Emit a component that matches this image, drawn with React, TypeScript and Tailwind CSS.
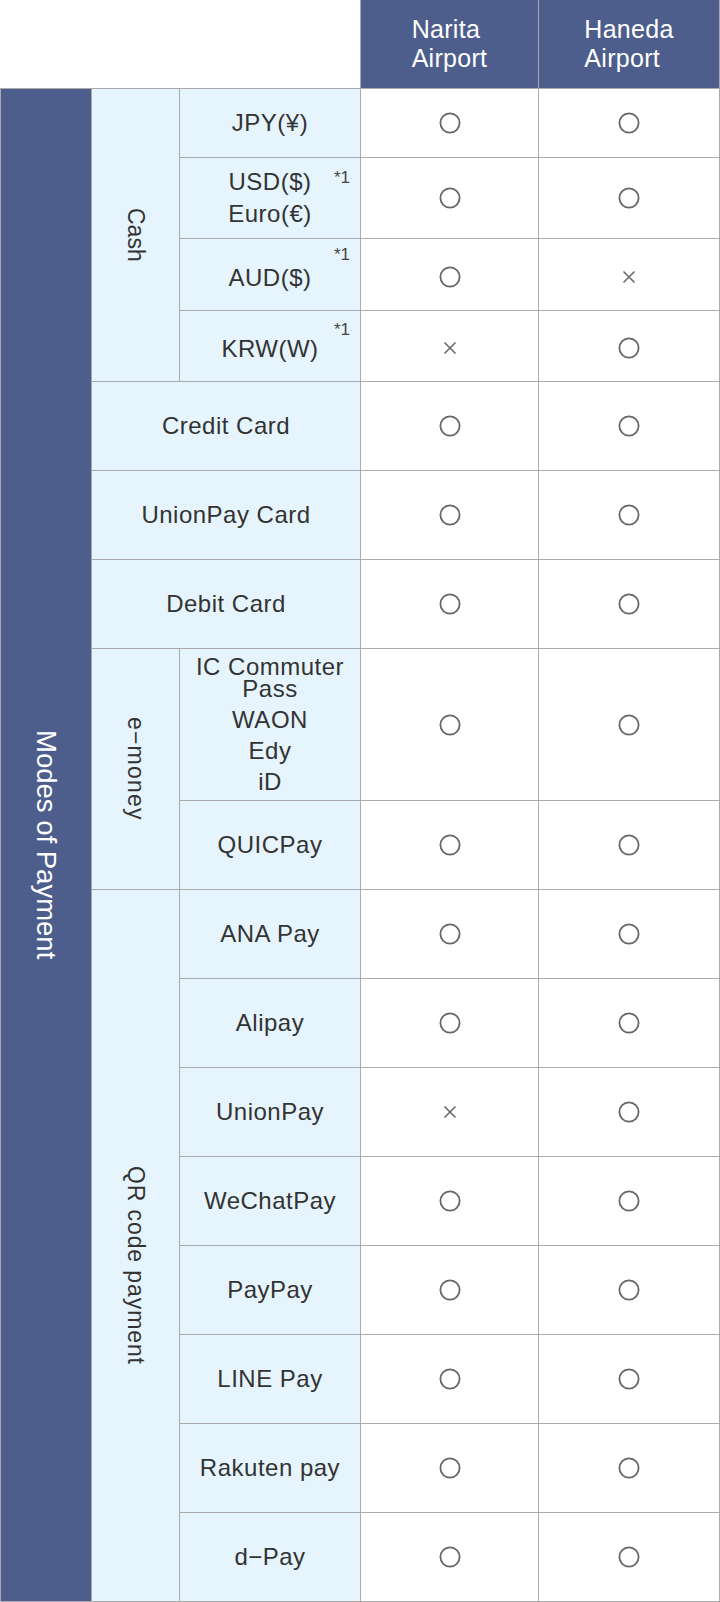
import React from "react";

// Payment modes table: Narita vs Haneda

const line = "border-b border-r border-[#aaaaaa]";
const itemCell = `${line} relative flex flex-col items-center justify-center bg-[#e6f5fd] text-[24px] leading-[22px] tracking-[0.5px] text-[#333] text-center`;
const markCell = `${line} flex items-center justify-center bg-white`;
const groupCell = `${line} flex items-center justify-center bg-[#e6f5fd]`;

function Circle() {
  return (
    <svg width="22" height="22" viewBox="0 0 22 22" aria-label="available">
      <circle cx="11" cy="11" r="9.6" fill="none" stroke="#666" strokeWidth="1.8" />
    </svg>
  );
}

function Cross() {
  return (
    <svg width="14" height="14" viewBox="0 0 14 14" aria-label="not available">
      <path d="M1.5 1.5 L12.5 12.5 M12.5 1.5 L1.5 12.5" stroke="#666" strokeWidth="1.5" fill="none" />
    </svg>
  );
}

function Mark({ ok, className = "" }: { ok: boolean; className?: string }) {
  return <div className={`${markCell} ${className}`}>{ok ? <Circle /> : <Cross />}</div>;
}

function Note({ className }: { className: string }) {
  return (
    <span className={`absolute right-[10px] text-[17px] leading-none tracking-normal text-[#444] ${className}`}>
      *1
    </span>
  );
}

function VText({ children, className = "" }: { children: React.ReactNode; className?: string }) {
  return <span className={`[writing-mode:vertical-rl] whitespace-nowrap ${className}`}>{children}</span>;
}

interface Row {
  label: string;
  narita: boolean;
  haneda: boolean;
}

const qrRows: Row[] = [
  { label: "ANA Pay", narita: true, haneda: true },
  { label: "Alipay", narita: true, haneda: true },
  { label: "UnionPay", narita: false, haneda: true },
  { label: "WeChatPay", narita: true, haneda: true },
  { label: "PayPay", narita: true, haneda: true },
  { label: "LINE Pay", narita: true, haneda: true },
  { label: "Rakuten pay", narita: true, haneda: true },
  { label: "d\u2212Pay", narita: true, haneda: true },
];

const cardRows: Row[] = [
  { label: "Credit Card", narita: true, haneda: true },
  { label: "UnionPay Card", narita: true, haneda: true },
  { label: "Debit Card", narita: true, haneda: true },
];

export default function App() {
  return (
    <div className="w-[720px] bg-white font-['Liberation_Sans',Arial,sans-serif]">
      <div className="grid grid-cols-[92px_88px_181px_178px_181px] grid-rows-[89px_69px_81px_72px_71px_89px_89px_89px_152px_89px_89px_89px_89px_89px_89px_89px_89px_89px]">
        {/* header */}
        <div className={`${line} col-span-3 bg-white`} />
        {["Narita", "Haneda"].map((name) => (
          <div
            key={name}
            className={`${line} flex items-center justify-center bg-[#4d5e8c] text-[25px] leading-[29px] tracking-[0.3px] text-white`}
          >
            <div className="text-left">
              {name}
              <br />
              Airport
            </div>
          </div>
        ))}

        {/* left title */}
        <div className={`${line} row-span-17 flex items-center justify-center border-l bg-[#4d5e8c]`}>
          <VText className="text-[27.5px] text-white">Modes of Payment</VText>
        </div>

        {/* cash */}
        <div className={`${groupCell} row-span-4`}>
          <VText className="text-[23px] text-[#333]">Cash</VText>
        </div>
        <div className={itemCell}>JPY(¥)</div>
        <Mark ok />
        <Mark ok />

        <div className={`${itemCell} gap-[10px]`}>
          <span>USD($)</span>
          <span>Euro(€)</span>
          <Note className="top-[11px]" />
        </div>
        <Mark ok />
        <Mark ok />

        <div className={`${itemCell} pt-[6px]`}>
          AUD($)
          <Note className="top-[7px]" />
        </div>
        <Mark ok className="pt-[4px]" />
        <Mark ok={false} className="pt-[4px]" />

        <div className={`${itemCell} pt-[5px]`}>
          KRW(W)
          <Note className="top-[10px]" />
        </div>
        <Mark ok={false} className="pt-[4px]" />
        <Mark ok className="pt-[3px]" />

        {/* cards */}
        {cardRows.map((r) => (
          <React.Fragment key={r.label}>
            <div className={`${itemCell} col-span-2`}>{r.label}</div>
            <Mark ok={r.narita} />
            <Mark ok={r.haneda} />
          </React.Fragment>
        ))}

        {/* e-money */}
        <div className={`${groupCell} row-span-2`}>
          <VText className="text-[23px] tracking-[1.2px] text-[#333]">e−money</VText>
        </div>
        <div className={`${itemCell} gap-[9px]`}>
          <span>IC Commuter Pass</span>
          <span>WAON</span>
          <span>Edy</span>
          <span>iD</span>
        </div>
        <Mark ok />
        <Mark ok />
        <div className={itemCell}>QUICPay</div>
        <Mark ok />
        <Mark ok />

        {/* QR code */}
        <div className={`${groupCell} row-span-8 pt-[40px]`}>
          <VText className="text-[23px] tracking-[0.9px] text-[#333]">QR code payment</VText>
        </div>
        {qrRows.map((r) => (
          <React.Fragment key={r.label}>
            <div className={itemCell}>{r.label}</div>
            <Mark ok={r.narita} />
            <Mark ok={r.haneda} />
          </React.Fragment>
        ))}
      </div>
    </div>
  );
}
